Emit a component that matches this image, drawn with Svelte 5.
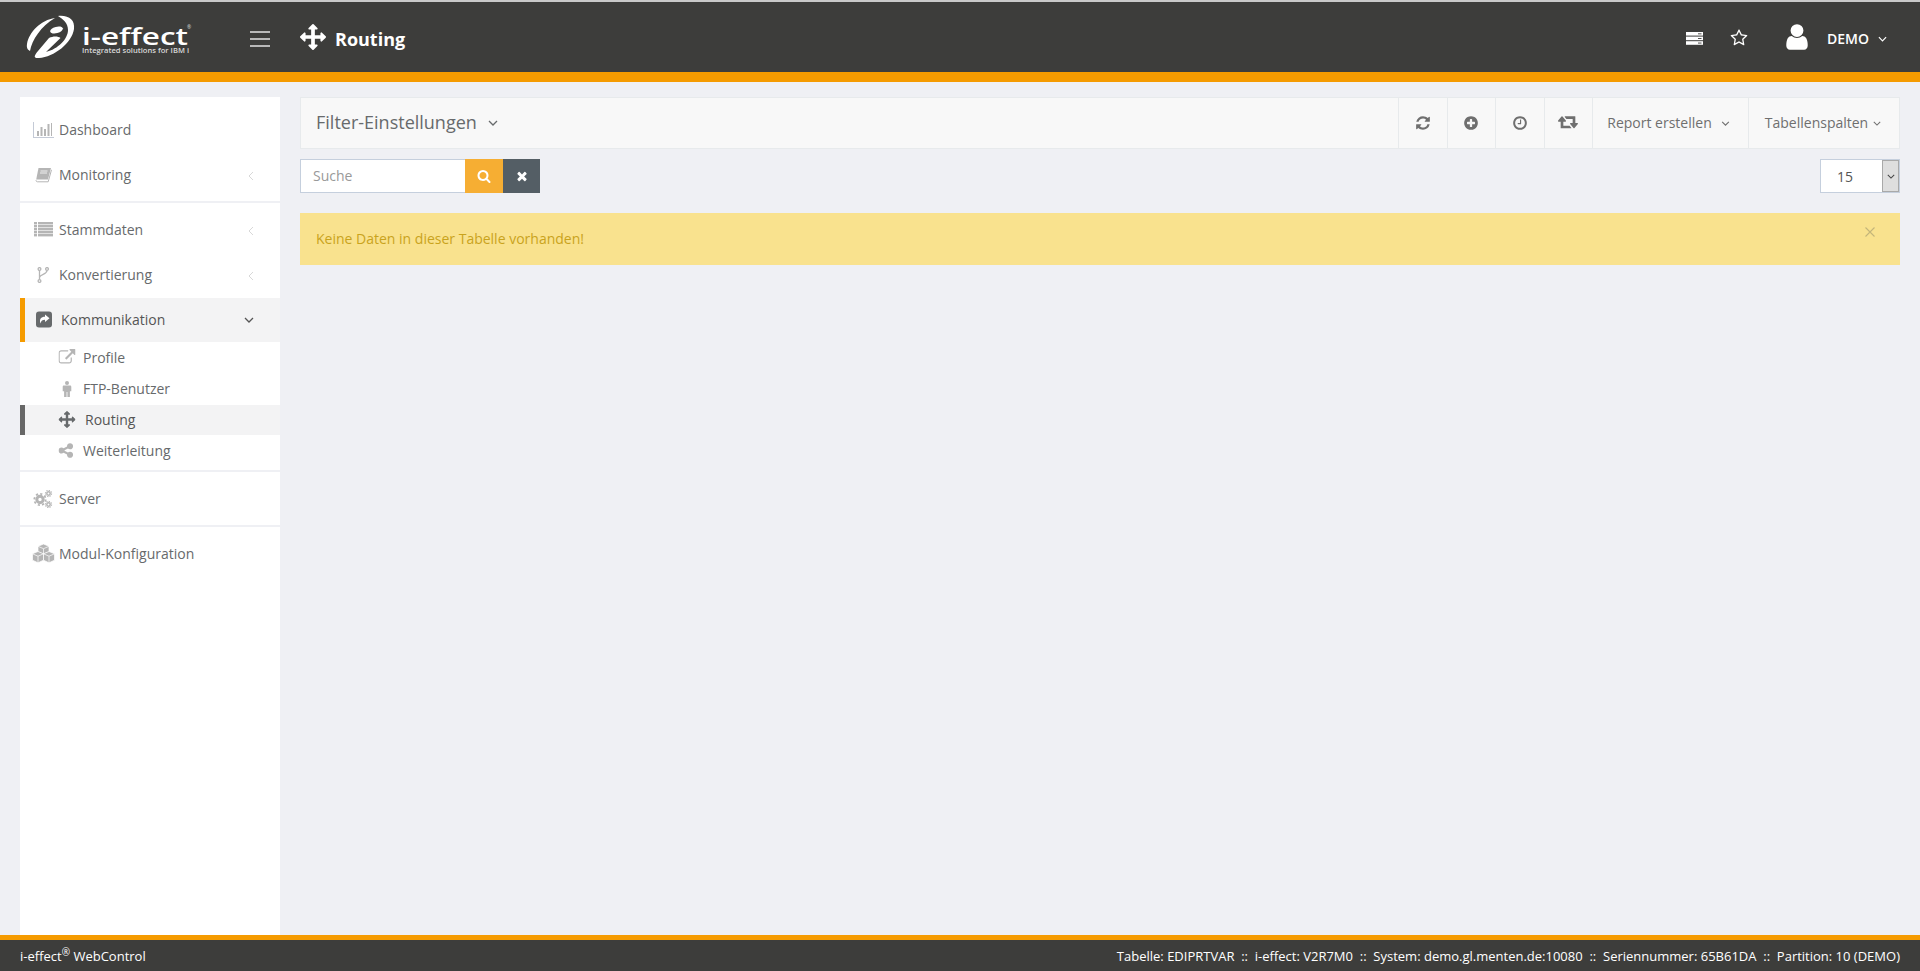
<script lang="ts">
	// FontAwesome-like glyph paths, 1792 box unless noted
	const P: Record<string, string> = {
		arrows: 'M1792 896q0 26-19 45l-256 256q-19 19-45 19t-45-19-19-45v-128h-384v384h128q26 0 45 19t19 45-19 45l-256 256q-19 19-45 19t-45-19l-256-256q-19-19-19-45t19-45 45-19h128v-384h-384v128q0 26-19 45t-45 19-45-19l-256-256q-19-19-19-45t19-45l256-256q19-19 45-19t45 19 19 45v128h384v-384h-128q-26 0-45-19t-19-45 19-45l256-256q19-19 45-19t45 19l256 256q19 19 19 45t-19 45-45 19h-128v384h384v-128q0-26 19-45t45-19 45 19l256 256q19 19 19 45z',
		refresh: 'M1639 1056q0 5-1 7-64 268-268 434.5t-478 166.5q-146 0-282.5-55t-243.5-157l-129 129q-19 19-45 19t-45-19-19-45v-448q0-26 19-45t45-19h448q26 0 45 19t19 45-19 45l-137 137q71 66 161 102t187 36q134 0 250-65t186-179q11-17 53-117 8-23 30-23h192q13 0 22.5 9.5t9.5 22.5zm25-800v448q0 26-19 45t-45 19h-448q-26 0-45-19t-19-45 19-45l138-138q-148-137-349-137-134 0-250 65t-186 179q-11 17-53 117-8 23-30 23h-199q-13 0-22.5-9.5t-9.5-22.5v-7q65-268 270-434.5t480-166.5q146 0 284 55.5t245 156.5l130-129q19-19 45-19t45 19 19 45z',
		plus: 'M1344 960v-128q0-26-19-45t-45-19h-256v-256q0-26-19-45t-45-19h-128q-26 0-45 19t-19 45v256h-256q-26 0-45 19t-19 45v128q0 26 19 45t45 19h256v256q0 26 19 45t45 19h128q26 0 45-19t19-45v-256h256q26 0 45-19t19-45zm320-64q0 209-103 385.5t-279.5 279.5-385.5 103-385.5-103-279.5-279.5-103-385.5 103-385.5 279.5-279.5 385.5-103 385.5 103 279.5 279.5 103 385.5z',
		clock: 'M1024 544v448q0 14-9 23t-23 9h-320q-14 0-23-9t-9-23v-64q0-14 9-23t23-9h224v-352q0-14 9-23t23-9h64q14 0 23 9t9 23zm416 352q0-148-73-273t-198-198-273-73-273 73-198 198-73 273 73 273 198 198 273 73 273-73 198-198 73-273zm224 0q0 209-103 385.5t-279.5 279.5-385.5 103-385.5-103-279.5-279.5-103-385.5 103-385.5 279.5-279.5 385.5-103 385.5 103 279.5 279.5 103 385.5z',
		search: 'M1216 832q0-185-131.5-316.5t-316.5-131.5-316.5 131.5-131.5 316.5 131.5 316.5 316.5 131.5 316.5-131.5 131.5-316.5zm512 832q0 52-38 90t-90 38q-54 0-90-38l-343-342q-179 124-399 124-143 0-273.5-55.5t-225-150-150-225-55.5-273.5 55.5-273.5 150-225 225-150 273.5-55.5 273.5 55.5 225 150 150 225 55.5 273.5q0 220-124 399l343 343q37 37 37 90z',
		times: 'M1490 1322q0 40-28 68l-136 136q-28 28-68 28t-68-28l-294-294-294 294q-28 28-68 28t-68-28l-136-136q-28-28-28-68t28-68l294-294-294-294q-28-28-28-68t28-68l136-136q28-28 68-28t68 28l294 294 294-294q28-28 68-28t68 28l136 136q28 28 28 68t-28 68l-294 294 294 294q28 28 28 68z',
		star: 'M1201 1004l306-297-422-62-189-382-189 382-422 62 306 297-73 421 378-199 377 199zm527-357q0 22-26 48l-363 354 86 500q1 7 1 20 0 50-41 50-19 0-40-12l-449-236-449 236q-22 12-40 12-21 0-31.5-14.5t-10.5-35.5q0-6 2-20l86-500-364-354q-25-27-25-48 0-37 56-46l502-73 225-455q19-41 49-41t49 41l225 455 502 73q56 9 56 46z',
		user: 'M1536 1399q0 109-62.5 187t-150.5 78h-854q-88 0-150.5-78t-62.5-187q0-85 8.5-160.5t31.5-152 58.5-131 94-89 134.5-34.5q131 128 313 128t313-128q76 0 134.5 34.5t94 89 58.5 131 31.5 152 8.5 160.5zm-256-887q0 159-112.5 271.5t-271.5 112.5-271.5-112.5-112.5-271.5 112.5-271.5 271.5-112.5 271.5 112.5 112.5 271.5z',
		external: 'M1408 928v320q0 119-84.5 203.5t-203.5 84.5h-832q-119 0-203.5-84.5t-84.5-203.5v-832q0-119 84.5-203.5t203.5-84.5h704q14 0 23 9t9 23v64q0 14-9 23t-23 9h-704q-66 0-113 47t-47 113v832q0 66 47 113t113 47h832q66 0 113-47t47-113v-320q0-14 9-23t23-9h64q14 0 23 9t9 23zm384-864v512q0 26-19 45t-45 19-45-19l-176-176-652 652q-10 10-23 10t-23-10l-114-114q-10-10-10-23t10-23l652-652-176-176q-19-19-19-45t19-45 45-19h512q26 0 45 19t19 45z',
		share: 'M1216 1024q133 0 226.5 93.5t93.5 226.5-93.5 226.5-226.5 93.5-226.5-93.5-93.5-226.5q0-12 2-34l-360-180q-92 86-218 86-133 0-226.5-93.5t-93.5-226.5 93.5-226.5 226.5-93.5q126 0 218 86l360-180q-2-22-2-34 0-133 93.5-226.5t226.5-93.5 226.5 93.5 93.5 226.5-93.5 226.5-226.5 93.5q-126 0-218-86l-360 180q2 22 2 34t-2 34l360 180q92-86 218-86z',
		retweet: 'M1280 1440q0 13-9.5 22.5t-22.5 9.5h-960q-8 0-13.5-2t-9-7-5.5-8-3-11.5-1-11.5v-600h-192q-26 0-45-19t-19-45q0-24 15-41l320-384q19-22 49-22t49 22l320 384q15 17 15 41 0 26-19 45t-45 19h-192v384h576q16 0 25 11l160 192q7 11 7 21zm640-416q0 24-15 41l-320 384q-20 23-49 23t-49-23l-320-384q-15-17-15-41 0-26 19-45t45-19h192v-384h-576q-16 0-25-12l-160-192q-7-9-7-20 0-13 9.5-22.5t22.5-9.5h960q8 0 13.5 2t9 7 5.5 8 3 11.5 1 11.5v600h192q26 0 45 19t19 45z'
	};

	type Item = { label: string; icon: string; caret?: boolean };
	const groupOne: Item[] = [
		{ label: 'Dashboard', icon: 'chart' },
		{ label: 'Monitoring', icon: 'book', caret: true }
	];
	const groupTwo: Item[] = [
		{ label: 'Stammdaten', icon: 'list', caret: true },
		{ label: 'Konvertierung', icon: 'fork', caret: true }
	];
	const subItems = [
		{ label: 'Profile', icon: 'external' },
		{ label: 'FTP-Benutzer', icon: 'male' },
		{ label: 'Routing', icon: 'arrows', active: true },
		{ label: 'Weiterleitung', icon: 'share' }
	];
</script>

{#snippet chev(cls: string)}
	<svg class={cls} viewBox="0 0 10 6"><path d="M1 1l4 4 4-4" fill="none" stroke="currentColor" stroke-width="1.3" /></svg>
{/snippet}

{#snippet glyph(name: string, size: number, box = 1792)}
	<svg width={size} height={size} viewBox="0 0 {box} {box}"><path d={P[name]} fill="currentColor" /></svg>
{/snippet}

{#snippet navIcon(name: string)}
	{#if name === 'chart'}
		<svg width="21" height="16" viewBox="0 0 21 16" fill="#b5b5b5">
			<path d="M0 0h1v15h20v1H0z" fill="#c4cad6" /><rect x="4" y="9" width="2" height="5" /><rect x="7.5" y="5" width="2" height="9" /><rect x="11" y="7" width="2" height="7" /><rect x="14.5" y="2" width="2" height="12" /><rect x="18" y="1" width="1" height="13" />
		</svg>
	{:else if name === 'book'}
		<svg width="17" height="16" viewBox="0 0 17 16">
			<path d="M3.5 1h12.5l-3 11.5H1.2z" fill="#b5b5b5" /><path d="M1 13.2c0 1 .6 1.6 1.6 1.6h10.6l3.3-12" fill="none" stroke="#b5b5b5" stroke-width="1" /><path d="M5.5 4h7M5 6h7" stroke="#fff" stroke-width=".8" />
		</svg>
	{:else if name === 'list'}
		<svg width="19" height="15" viewBox="0 0 19 15" fill="#b5b5b5">
			{#each [0, 3, 6, 9, 12] as y}
				<rect x="0" {y} width="3" height="2.4" /><rect x="4" {y} width="15" height="2.4" />
			{/each}
		</svg>
	{:else if name === 'fork'}
		<svg width="12" height="16" viewBox="0 0 12 16" fill="none" stroke="#b5b5b5" stroke-width="1.3">
			<circle cx="2.5" cy="2" r="1.4" /><circle cx="2.5" cy="14" r="1.4" /><circle cx="10" cy="2" r="1.4" /><path d="M2.5 3.5v9M10 3.5c0 4-7 3.5-7.5 7" />
		</svg>
	{:else if name === 'male'}
		<svg width="12" height="16" viewBox="0 0 12 16" fill="#b5b5b5">
			<circle cx="6" cy="2" r="2" /><path d="M3 4.6h6c.8 0 1.3.5 1.3 1.3v4.3H8.900V16H6.400v-5H5.600v5H3.100v-5.800H1.700V5.900c0-.8.5-1.300 1.300-1.300z" />
		</svg>
	{:else if name === 'cogs'}
		<svg width="20" height="18" viewBox="0 0 20 18" fill="none" stroke="#b5b5b5">
			<circle cx="7" cy="9.500" r="3.200" stroke-width="3" /><circle cx="7" cy="9.500" r="5.700" stroke-width="1.800" stroke-dasharray="2.200 2.200" />
			<circle cx="15.500" cy="3.500" r="1.700" stroke-width="1.500" /><circle cx="15.500" cy="3.500" r="3.100" stroke-width="1.100" stroke-dasharray="1.300 1.100" />
			<circle cx="15.500" cy="14.500" r="1.700" stroke-width="1.500" /><circle cx="15.500" cy="14.500" r="3.100" stroke-width="1.100" stroke-dasharray="1.300 1.100" />
		</svg>
	{:else if name === 'cubes'}
		<svg width="23" height="19" viewBox="0 0 23 19" fill="#b5b5b5" stroke="#fff" stroke-width=".7">
			<path d="M11.500 0l5.500 2.300v5.400l-5.500 2.400L6 7.700V2.300z" /><path d="M6 7.500l5.500 2.300v6.400L6 18.800.5 16.200V9.800z" /><path d="M17 7.500l5.500 2.300v6.400L17 18.800l-5.500-2.600V9.800z" />
			<path d="M6 2.300l5.500 2.400 5.500-2.400M.5 9.800L6 12.200l5.500-2.400 5.500 2.400 5.500-2.400M6 12.200v6.600M17 12.200v6.600M11.500 4.700v5.400" fill="none" />
		</svg>
	{:else}
		{@render glyph(name, 17)}
	{/if}
{/snippet}

{#snippet logo()}
	<svg class="logo" width="168" height="44" viewBox="0 0 168 44">
		<path d="M32 1C43 0 49 5 48 14 46 28 28 42 13 43 7 43.500 8 41 12 36L23 23C27 21 32 21 34.500 23L20 37C32 34 42 24 42 15 42 8 37 4 32 1Z" fill="#fff" />
		<path d="M29 3C15 5 3 17 1 29c-.7 4 1 6 3 7C6 25 15 11 29 3Z" fill="#fff" />
		<ellipse cx="30.500" cy="15" rx="6.500" ry="3.200" fill="#fff" transform="rotate(-15 30.500 15)" />
		<text x="56" y="30" class="logo-word" textLength="106" lengthAdjust="spacingAndGlyphs">i-effect</text>
		<text x="161" y="14" class="logo-reg">®</text>
		<text x="56" y="37.500" class="logo-sub" textLength="107" lengthAdjust="spacingAndGlyphs">Integrated solutions for IBM i</text>
	</svg>
{/snippet}

<div class="page">
	<header class="topbar">
		{@render logo()}
		<div class="burger"><span></span><span></span><span></span></div>
		<div class="page-title">
			{@render glyph('arrows', 26)}
			<span>Routing</span>
		</div>
		<div class="top-right">
			<svg width="17" height="13" viewBox="0 0 17 13" fill="#fff">
				{#each [0, 4.6, 9.2] as y}
					<path d="M0 {y}h17v3.600H0z" /><rect x="12" y={y + 1.4} width="3.500" height=".9" fill="#3d3d3b" />
				{/each}
			</svg>
			<span class="star">{@render glyph('star', 18)}</span>
			<span class="avatar">{@render glyph('user', 30)}</span>
			<span class="demo">DEMO</span>
			{@render chev('chev-top')}
		</div>
	</header>

	<div class="body">
		<nav class="sidebar">
			<div class="group first">
				{#each groupOne as it}
					<div class="nav-item">
						<span class="nav-icon">{@render navIcon(it.icon)}</span>
						<span>{it.label}</span>
						{#if it.caret}<svg class="caret" viewBox="0 0 6 10"><path d="M5 1L1 5l4 4" fill="none" stroke="currentColor" /></svg>{/if}
					</div>
				{/each}
			</div>
			<div class="group">
				{#each groupTwo as it}
					<div class="nav-item">
						<span class="nav-icon">{@render navIcon(it.icon)}</span>
						<span>{it.label}</span>
						<svg class="caret" viewBox="0 0 6 10"><path d="M5 1L1 5l4 4" fill="none" stroke="currentColor" /></svg>
					</div>
				{/each}
				<div class="nav-open">
					<svg width="17" height="17" viewBox="0 0 17 17">
						<rect width="16" height="16" y=".5" rx="3" fill="#676a6c" />
						<path d="M9 3.500l4.500 3.800L9 11V8.700C6.500 8.700 5 9.500 4.500 12.500 3 8 5 5.700 9 5.700z" fill="#fff" />
					</svg>
					<span>Kommunikation</span>
					{@render chev('chev-open')}
				</div>
				{#each subItems as sub}
					<div class="sub-item" class:active={sub.active}>
						<span class="sub-icon">{@render navIcon(sub.icon)}</span>
						<span>{sub.label}</span>
					</div>
				{/each}
			</div>
			<div class="group">
				<div class="nav-item"><span class="nav-icon">{@render navIcon('cogs')}</span><span>Server</span></div>
			</div>
			<div class="group last">
				<div class="nav-item"><span class="nav-icon">{@render navIcon('cubes')}</span><span>Modul-Konfiguration</span></div>
			</div>
		</nav>

		<main class="content">
			<div class="filterbar">
				<div class="filter-title">Filter-Einstellungen {@render chev('chev-filter')}</div>
				<div class="tool">{@render glyph('refresh', 16)}</div>
				<div class="tool">{@render glyph('plus', 16)}</div>
				<div class="tool">{@render glyph('clock', 16)}</div>
				<div class="tool">{@render glyph('retweet', 20, 1920)}</div>
				<div class="tool text report">Report erstellen {@render chev('chev-tool')}</div>
				<div class="tool text cols">Tabellenspalten {@render chev('chev-tool small')}</div>
			</div>

			<div class="searchrow">
				<div class="search-input">Suche</div>
				<div class="btn-search">{@render glyph('search', 14)}</div>
				<div class="btn-clear">{@render glyph('times', 14)}</div>
				<div class="pagesize">
					<span class="size-value">15</span>
					<span class="size-arrow">{@render chev('chev-size')}</span>
				</div>
			</div>

			<div class="alert">
				<span>Keine Daten in dieser Tabelle vorhanden!</span>
				<svg class="alert-close" viewBox="0 0 10 10"><path d="M.5.5l9 9M9.500.5l-9 9" stroke="currentColor" stroke-width="1.100" /></svg>
			</div>
		</main>
	</div>

	<footer class="footer">
		<span>i-effect<sup>®</sup> WebControl</span>
		<span class="footer-info">Tabelle: EDIPRTVAR &nbsp;::&nbsp; i-effect: V2R7M0 &nbsp;::&nbsp; System: demo.gl.menten.de:10080 &nbsp;::&nbsp; Seriennummer: 65B61DA &nbsp;::&nbsp; Partition: 10 (DEMO)</span>
	</footer>
</div>

<style>
	:global(body) {
		margin: 0;
		background: #eff0f4;
	}

	.page {
		height: 971px;
		display: flex;
		flex-direction: column;
		font-family: 'Open Sans', 'Liberation Sans', sans-serif;
		font-size: 14px;
		color: #676a6c;
		overflow: hidden;
	}

	.topbar {
		height: 70px;
		box-sizing: content-box;
		border-top: 2px solid #c9c9c9;
		border-bottom: 10px solid #f59b00;
		background: #3d3d3b;
		display: flex;
		align-items: center;
		color: #fff;
		flex-shrink: 0;
	}

	.logo {
		margin-left: 26px;
		flex-shrink: 0;
	}
	.logo-word {
		font-family: 'Open Sans', sans-serif;
		font-weight: 600;
		font-size: 24px;
		fill: #fff;
	}
	.logo-reg {
		font-family: 'Open Sans', sans-serif;
		font-size: 5px;
		fill: #ddd;
	}
	.logo-sub {
		font-family: 'Open Sans', sans-serif;
		font-weight: 600;
		font-size: 6.500px;
		fill: #d8d8d8;
	}

	.burger {
		margin: 3px 0 0 56px;
		width: 20px;
		display: flex;
		flex-direction: column;
		gap: 5px;
	}
	.burger span {
		height: 2px;
		background: #b9b9b9;
	}

	.page-title {
		margin-left: 30px;
		display: flex;
		align-items: center;
		gap: 9px;
		font-size: 18px;
		font-weight: 700;
	}
	.page-title span {
		position: relative;
		top: 2px;
	}

	.top-right {
		margin-left: auto;
		display: flex;
		align-items: center;
		padding: 2px 33px 0 0;
	}
	.star {
		margin-left: 27px;
		display: flex;
	}
	.avatar {
		margin-left: 34px;
		display: flex;
		position: relative;
		top: -1px;
	}
	.demo {
		margin-left: 15px;
		font-size: 14px;
		font-weight: 600;
	}
	:global(.chev-top) {
		width: 9px;
		height: 6px;
		margin-left: 9px;
		position: relative;
		top: 1px;
	}

	.body {
		flex: 1;
		display: flex;
		min-height: 0;
		padding: 15px 20px 0;
		gap: 20px;
	}

	.sidebar {
		width: 260px;
		flex-shrink: 0;
		background: #fff;
	}
	.group {
		border-bottom: 2px solid #eff0f4;
		padding: 4px 0;
	}
	.group.first {
		padding-top: 10px;
	}
	.group.last {
		border-bottom: 0;
	}
	.nav-item {
		height: 45px;
		display: flex;
		align-items: center;
		padding-left: 39px;
		position: relative;
	}
	.nav-icon {
		position: absolute;
		left: 0;
		width: 39px;
		padding-left: 7px;
		box-sizing: border-box;
		display: flex;
		justify-content: center;
		color: #b5b5b5;
	}
	.caret {
		position: absolute;
		right: 26px;
		top: 19px;
		width: 6px;
		height: 10px;
		color: #d8d8d8;
	}
	.nav-open {
		height: 44px;
		box-sizing: border-box;
		margin-top: 1px;
		background: #f3f3f4;
		border-left: 5px solid #f59b00;
		display: flex;
		align-items: center;
		gap: 8px;
		padding: 0 0 2px 11px;
		color: #555;
		position: relative;
	}
	:global(.chev-open) {
		position: absolute;
		right: 26px;
		top: 19px;
		width: 10px;
		height: 6px;
	}
	.sub-item {
		height: 31px;
		box-sizing: border-box;
		display: flex;
		align-items: center;
		padding-left: 63px;
		position: relative;
	}
	.sub-icon {
		position: absolute;
		left: 47px;
		transform: translateX(-50%);
		display: flex;
		color: #b5b5b5;
	}
	.sub-item.active {
		height: 30px;
		margin-top: 1px;
		background: #f3f3f4;
		border-left: 5px solid #676767;
		padding: 0 0 2px 60px;
		color: #555;
	}
	.sub-item.active .sub-icon {
		left: 42px;
		color: #676a6c;
	}

	.content {
		flex: 1;
		min-width: 0;
	}
	.filterbar {
		height: 52px;
		background: #f8f8f8;
		border: 1px solid #e7eaec;
		display: flex;
		align-items: stretch;
		box-sizing: border-box;
		color: #6f6f6f;
	}
	.filter-title {
		flex: 1;
		display: flex;
		align-items: center;
		padding: 0 0 2px 15px;
		font-size: 18px;
		gap: 11px;
		color: #676a6c;
	}
	:global(.chev-filter) {
		width: 10px;
		height: 6px;
		position: relative;
		top: 1px;
	}
	.tool {
		width: 48.500px;
		box-sizing: border-box;
		border-left: 1px solid #e7eaec;
		display: flex;
		align-items: center;
		justify-content: center;
		flex-shrink: 0;
	}
	.tool.text {
		font-size: 14px;
		gap: 9px;
		white-space: nowrap;
		padding: 0 4px 2px 0;
	}
	.tool.report {
		width: 156px;
	}
	.tool.cols {
		width: 151px;
		gap: 5px;
		padding-right: 2px;
	}
	:global(.chev-tool) {
		width: 9px;
		height: 5px;
		position: relative;
		top: 1px;
	}
	:global(.chev-tool.small) {
		width: 8px;
	}

	.searchrow {
		margin-top: 10px;
		height: 34px;
		display: flex;
	}
	.search-input {
		width: 165px;
		box-sizing: border-box;
		background: #fff;
		border: 1px solid #c5cfdd;
		border-right: 0;
		padding: 0 0 2px 12px;
		display: flex;
		align-items: center;
		color: #999;
	}
	.btn-search,
	.btn-clear {
		height: 34px;
		display: flex;
		align-items: center;
		justify-content: center;
		color: #fff;
	}
	.btn-search {
		width: 38px;
		background: #f6ae33;
	}
	.btn-clear {
		width: 37px;
		background: #545e65;
	}
	.pagesize {
		margin-left: auto;
		width: 80px;
		box-sizing: border-box;
		background: #fff;
		border: 1px solid #c5cfdd;
		display: flex;
		justify-content: space-between;
		color: #555;
	}
	.size-value {
		align-self: center;
		margin-left: 16px;
	}
	.size-arrow {
		width: 17px;
		box-sizing: border-box;
		background: #dedede;
		border: 1px solid #a9a9a9;
		display: flex;
		align-items: center;
		justify-content: center;
		color: #444;
	}
	:global(.chev-size) {
		width: 8px;
		height: 5px;
	}

	.alert {
		margin-top: 20px;
		height: 52px;
		box-sizing: border-box;
		background: #f9e28e;
		color: #c9a31d;
		display: flex;
		align-items: center;
		padding: 0 0 2px 16px;
		position: relative;
	}
	.alert-close {
		position: absolute;
		right: 25px;
		top: 14px;
		width: 10px;
		height: 10px;
		color: #c4b57a;
	}

	.footer {
		height: 31px;
		flex-shrink: 0;
		border-top: 5px solid #f59b00;
		background: #3d3d3b;
		color: #fff;
		display: flex;
		align-items: center;
		justify-content: space-between;
		padding: 0 20px;
		font-size: 13px;
	}
	.footer sup {
		font-size: 10px;
		line-height: 0;
	}
</style>
